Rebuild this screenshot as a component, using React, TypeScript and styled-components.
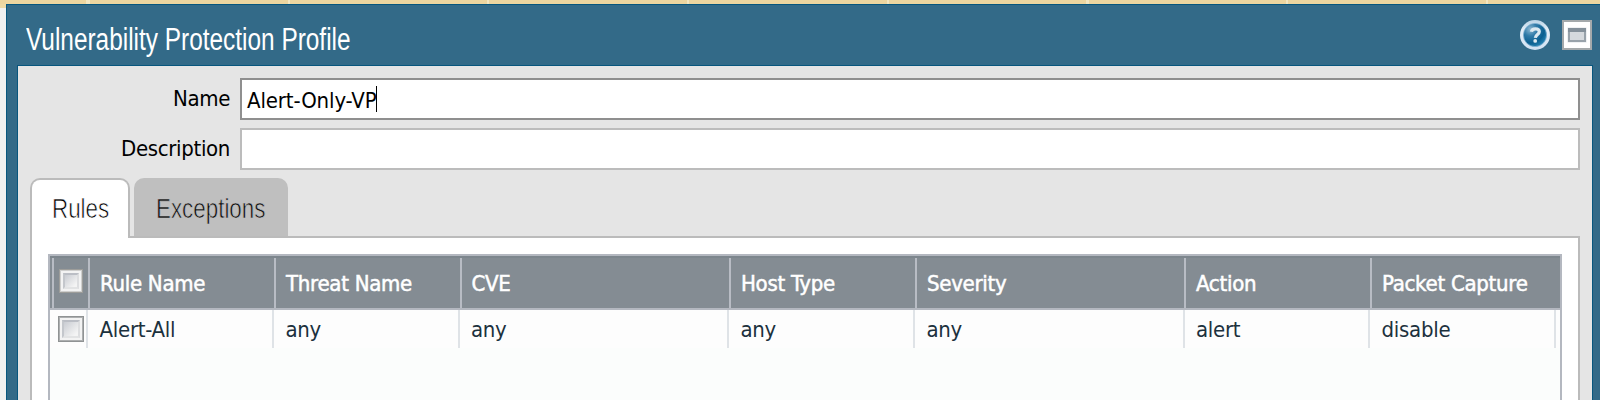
import React from 'react';
import styled, { createGlobalStyle, css } from 'styled-components';

const GlobalStyle = createGlobalStyle`
  *, *::before, *::after { box-sizing: border-box; }
  body {
    margin: 0;
    overflow: hidden;
    background: #f0f0f0;
    font-family: "DejaVu Sans Condensed", Tahoma, sans-serif;
    font-size: 22px;
    letter-spacing: -0.28px;
    color: #000;
  }
`;

const Page = styled.div`
  height: 400px;
  display: flex;
  flex-direction: column;
  overflow: hidden;
  background: linear-gradient(#ecd9a6 8px, #f0f0f0 8px);
`;

const Strip = styled.div`
  height: 4px;
  flex: none;
  background: repeating-linear-gradient(90deg, #f3e6c2 0 2px, #ecd5a0 2px 199.7px) 88px 0;
`;

const Dialog = styled.section`
  flex: 1;
  display: flex;
  flex-direction: column;
  margin-left: 6px;
  padding: 0 7px 0 10px;
  background: #336a88;
  border-top: 1px solid #07567e;
  border-left: 1px solid #07567e;
`;

const TitleBar = styled.header`
  height: 60px;
  flex: none;
  display: flex;
  align-items: flex-start;
  padding: 15px 1px 0 9px;
`;

const condensed = css`
  font-family: "Liberation Sans", Arial, sans-serif;
  letter-spacing: 0;
  white-space: nowrap;
  transform-origin: 0 0;
`;

const Title = styled.h1`
  ${condensed}
  flex: 1;
  margin: 0;
  font-size: 31px;
  font-weight: 400;
  line-height: 40px;
  color: #fff;
  transform: scaleX(0.787);
`;

const Tools = styled.div`
  display: flex;
  gap: 12px;
`;

const Body = styled.div`
  flex: 1;
  display: flex;
  flex-direction: column;
  padding: 12px 12px 0 12px;
  background: #e5e5e5;
  border: 1px solid #07567e;
  border-bottom: 0;
`;

const Field = styled.label`
  display: flex;
  height: 42px;
  margin-bottom: 8px;
`;

const Label = styled.span`
  width: 200px;
  flex: none;
  padding: 6px 0 0 0;
  line-height: 30px;
  text-align: right;
  letter-spacing: -0.35px;
`;

const Control = styled.span<{ $focused?: boolean }>`
  flex: 1;
  display: flex;
  align-items: flex-start;
  margin-left: 10px;
  padding: 6px 5px 0;
  line-height: 30px;
  letter-spacing: -0.12px;
  background: #fff;
  border: 2px solid ${p => (p.$focused ? '#8f8f8f' : '#bcbcbc')};
`;

const Caret = styled.i`
  width: 1px;
  height: 26px;
  margin-left: -1px;
  background: #000;
`;

const Tabs = styled.nav`
  display: flex;
  gap: 4px;
  height: 60px;
  flex: none;
  position: relative;
  z-index: 1;
  margin-bottom: -2px;
`;

const Tab = styled.div<{ $active?: boolean; $width: number }>`
  --face: #bfbfbf;
  width: ${p => p.$width}px;
  height: ${p => (p.$active ? 60 : 58)}px;
  padding: ${p => (p.$active ? '11px 0 0 20px' : '13px 0 0 22px')};
  border-radius: 10px 10px 0 0;
  line-height: 34px;
  background: var(--face);
  color: #111;
  ${p => p.$active && css`
    --face: #fff;
    color: #000;
    border: 2px solid #bbb;
    border-bottom: 0;
  `}
`;

const TabText = styled.span`
  ${condensed}
  display: inline-block;
  font-size: 28.5px;
  transform: scaleX(0.785);
  -webkit-text-stroke: 0.7px var(--face);
`;

const Panel = styled.div`
  flex: 1;
  display: flex;
  padding: 16px 16px 0;
  background: #fff;
  border: 2px solid #bbb;
  border-bottom: 0;
`;

const Grid = styled.div`
  flex: 1;
  background: #fbfdfc;
  border: 2px solid #b4b8c0;
  border-bottom: 0;
`;

const HeadRow = styled.div`
  display: grid;
  grid-template-columns: 36px 186px 185.5px 269.5px 186px 269px 186px 1fr;
  height: 54px;
  padding: 2px 0 0 2px;
  background: #848c93;
  border-bottom: 2px solid #b4b8c0;
  box-shadow: inset 0 2px #7d868d;
  color: #fff;
`;

const HeadCell = styled.div`
  padding: 11px 0 0 10px;
  border-left: 2px solid #b8bcc4;
  line-height: 30px;
  white-space: nowrap;
  -webkit-text-stroke: 0.5px #fff;
`;

const DataRow = styled.div`
  display: grid;
  grid-template-columns: 38px 186px 185.5px 269.5px 186px 269.5px 185.5px 186px;
  height: 38px;
  background: #fdfdfd;
  color: #1c313d;
`;

const DataCell = styled.div`
  padding: 5px 0 0 11.5px;
  border-right: 2px solid #dfe3e7;
  line-height: 30px;
  white-space: nowrap;
`;

const HeadCheck = styled(HeadCell)`
  padding: 11px 0 0 5px;
`;

const DataCheck = styled(DataCell)`
  padding: 6px 0 0 8px;
`;

const Checkbox = styled.span<{ $size: number; $edge: string; $rim: string }>`
  display: block;
  width: ${p => p.$size}px;
  height: ${p => p.$size}px;
  padding: 3px;
  background: #f3f3f3;
  border: 1px solid ${p => p.$edge};
  box-shadow: inset 0 0 0 1px ${p => p.$rim};

  &::after {
    content: '';
    display: block;
    height: 100%;
    border: 2px solid;
    border-color: #bbbec5 #dddee0 #e2e3e4 #c4c7cc;
    background: linear-gradient(135deg, #c9ccd2, #f4f4f4 85%);
  }
`;

const HelpIcon = () => (
  <svg width="30" height="30" viewBox="0 0 30 30">
    <defs>
      <linearGradient id="ring" x1="0" y1="0" x2="0" y2="1">
        <stop offset="0" stopColor="#b9d3e6" />
        <stop offset="0.35" stopColor="#e6eff8" />
        <stop offset="1" stopColor="#d0e0f1" />
      </linearGradient>
      <radialGradient id="ball" cx="0.3" cy="0.25" r="0.85">
        <stop offset="0" stopColor="#8db8d2" />
        <stop offset="0.35" stopColor="#2f7aa8" />
        <stop offset="0.7" stopColor="#0b5f90" />
        <stop offset="1" stopColor="#2b8aba" />
      </radialGradient>
    </defs>
    <circle cx="15" cy="15" r="15" fill="url(#ring)" />
    <circle cx="15" cy="15" r="11.6" fill="url(#ball)" stroke="#7fb0d0" strokeWidth="0.8" />
    <path d="M11.4 11.8C11.8 9.2 13.6 8.8 15.4 8.8C18 8.8 19.3 10 19.3 11.8C19.3 14.4 15.6 14.6 15.3 17.8" fill="none" stroke="#dce9f1" strokeWidth="3.2" />
    <circle cx="15.2" cy="20.9" r="1.9" fill="#dce9f1" />
  </svg>
);

const MaximizeIcon = () => (
  <svg width="30" height="30" viewBox="0 0 30 30">
    <rect x="1" y="1" width="28" height="28" fill="#fff" stroke="#a4a9ab" strokeWidth="2" />
    <rect x="5.5" y="7.5" width="19" height="15" fill="#dfe3e7" />
    <rect x="7" y="9" width="16" height="12" fill="#d5d9dd" stroke="#98a2aa" strokeWidth="2" />
    <rect x="6" y="8" width="18" height="4" fill="#84909a" />
  </svg>
);

const names = ['Rule Name', 'Threat Name', 'CVE', 'Host Type', 'Severity', 'Action', 'Packet Capture'];
const values = ['Alert-All', 'any', 'any', 'any', 'any', 'alert', 'disable'];

export default function App() {
  return (
    <Page>
      <GlobalStyle />
      <Strip />
      <Dialog>
        <TitleBar>
          <Title>Vulnerability Protection Profile</Title>
          <Tools>
            <HelpIcon />
            <MaximizeIcon />
          </Tools>
        </TitleBar>
        <Body>
          <Field>
            <Label>Name</Label>
            <Control $focused>Alert-Only-VP<Caret /></Control>
          </Field>
          <Field>
            <Label>Description</Label>
            <Control />
          </Field>
          <Tabs>
            <Tab $active $width={100}><TabText>Rules</TabText></Tab>
            <Tab $width={154}><TabText>Exceptions</TabText></Tab>
          </Tabs>
          <Panel>
            <Grid>
              <HeadRow>
                <HeadCheck><Checkbox $size={24} $edge="#9d9d9a" $rim="#cfcfce" /></HeadCheck>
                {names.map(n => <HeadCell key={n}>{n}</HeadCell>)}
              </HeadRow>
              <DataRow>
                <DataCheck><Checkbox $size={26} $edge="#909394" $rim="#adafb0" /></DataCheck>
                {values.map((v, i) => <DataCell key={i}>{v}</DataCell>)}
              </DataRow>
            </Grid>
          </Panel>
        </Body>
      </Dialog>
    </Page>
  );
}
